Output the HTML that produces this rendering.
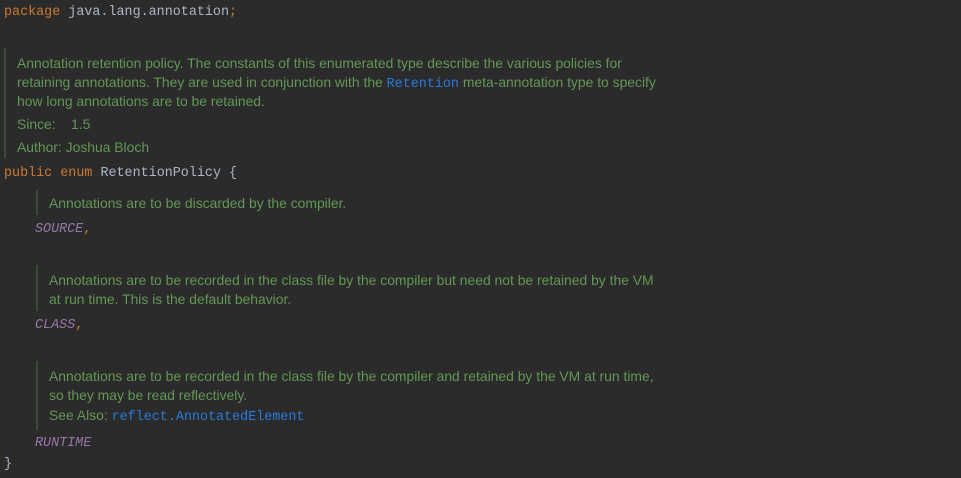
<!DOCTYPE html>
<html><head><meta charset="utf-8"><style>
body{margin:0;width:961px;height:478px;background:#2b2b2b;overflow:hidden;position:relative}
.l{position:absolute;white-space:nowrap;line-height:18px}
.m{font-family:"Liberation Mono",monospace;font-size:13.4px;color:#a9b7c6}
.d{font-family:"Liberation Sans",sans-serif;font-size:13.9px;color:#629755}
.k{color:#cc7832}
.e{color:#9876aa;font-style:italic}
.a{color:#287bde;font-family:"Liberation Mono",monospace;font-size:13.4px}
.bar{position:absolute;width:2px;background:#3c4a3a}
</style></head><body>
<div class="l m" style="left:4px;top:4px"><span class="k">package</span> java.lang.annotation<span class="k">;</span></div>
<div class="bar" style="left:4px;top:48px;height:110px"></div>
<div class="l d" style="left:17px;top:54px">Annotation retention policy. The constants of this enumerated type describe the various policies for</div>
<div class="l d" style="left:17px;top:73px">retaining annotations. They are used in conjunction with the <span class="a">Retention</span> meta-annotation type to specify</div>
<div class="l d" style="left:17px;top:92px">how long annotations are to be retained.</div>
<div class="l d" style="left:17px;top:115px">Since:&nbsp;&nbsp;&nbsp; 1.5</div>
<div class="l d" style="left:17px;top:138px">Author: Joshua Bloch</div>
<div class="l m" style="left:4px;top:165px"><span class="k">public enum</span> RetentionPolicy {</div>
<div class="bar" style="left:36px;top:190px;height:25px"></div>
<div class="l d" style="left:49px;top:194px">Annotations are to be discarded by the compiler.</div>
<div class="l m e" style="left:35px;top:221px">SOURCE<span class="k" style="font-style:normal">,</span></div>
<div class="bar" style="left:36px;top:265px;height:46px"></div>
<div class="l d" style="left:49px;top:271px">Annotations are to be recorded in the class file by the compiler but need not be retained by the VM</div>
<div class="l d" style="left:49px;top:290px">at run time. This is the default behavior.</div>
<div class="l m e" style="left:35px;top:317px">CLASS<span class="k" style="font-style:normal">,</span></div>
<div class="bar" style="left:36px;top:361px;height:69px"></div>
<div class="l d" style="left:49px;top:367px">Annotations are to be recorded in the class file by the compiler and retained by the VM at run time,</div>
<div class="l d" style="left:49px;top:386px">so they may be read reflectively.</div>
<div class="l d" style="left:49px;top:406px">See Also: <span class="a">reflect.AnnotatedElement</span></div>
<div class="l m e" style="left:35px;top:435px">RUNTIME</div>
<div class="l m" style="left:4px;top:456px">}</div>
</body></html>
